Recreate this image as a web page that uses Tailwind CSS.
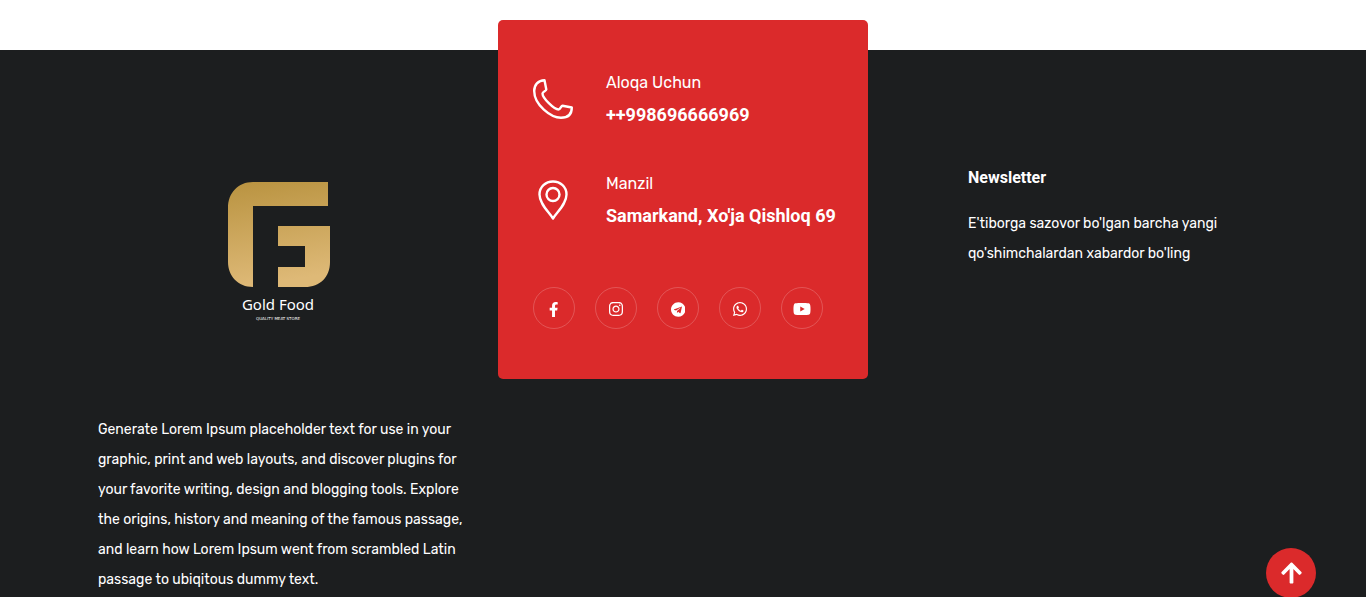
<!DOCTYPE html>
<html lang="uz">
<head>
<meta charset="utf-8">
<meta name="viewport" content="width=device-width, initial-scale=1">
<title>Gold Food</title>
<script src="https://cdn.jsdelivr.net/npm/@tailwindcss/browser@4"></script>
</head>
<body class="flex min-h-screen flex-col overflow-x-hidden bg-white font-['Rubik','Roboto',sans-serif] text-sm leading-[30px] text-white">
<footer class="mt-[50px] grow bg-[#1c1e1f] px-6">
  <div class="mx-auto grid max-w-[1170px] grid-cols-1 items-start gap-[30px] md:grid-cols-3">
    <section class="pt-[120px]">
      <a href="#" class="flex h-[184px] justify-center pt-3 pr-[10px]" aria-label="Gold Food">
        <svg class="h-[144px] w-[104px]" viewBox="0 0 104 144" role="img" aria-label="Gold Food, quality meat store">
          <defs>
            <linearGradient id="gold" x1="0" y1="0" x2="0.15" y2="1">
              <stop offset="0" stop-color="#b99340"/><stop offset="1" stop-color="#deb977"/>
            </linearGradient>
          </defs>
          <path fill="url(#gold)" d="M27 0H102V24H27V105C12 105 2 94 2 80V26C2 11 12 0 27 0ZM52 44H104V80C104 95 94 105 79 105H52V85H79V64H52Z"/>
          <text x="52" y="128" text-anchor="middle" class="fill-white font-['Noto_Sans'] text-[15px]">Gold Food</text>
          <text x="52" y="138" text-anchor="middle" class="fill-white font-['DejaVu_Sans'] text-[4px]">QUALITY MEAT STORE</text>
        </svg>
      </a>
      <p class="mt-[61px]">Generate Lorem Ipsum placeholder text for use in your graphic, print and web layouts, and discover plugins for your favorite writing, design and blogging tools. Explore the origins, history and meaning of the famous passage, and learn how Lorem Ipsum went from scrambled Latin passage to ubiqitous dummy text.</p>
    </section>

    <section class="-mt-[30px] rounded-[5px] bg-[#db2a2b] px-[35px] pt-12 pb-[50px]">
      <ul class="flex flex-col gap-[39px]">
        <li class="flex gap-[33px]">
          <svg class="mt-[11px] size-10 shrink-0" viewBox="0 0 40 40" fill="none" stroke="#fff" stroke-width="2.400" stroke-linejoin="round" aria-hidden="true">
            <path d="M11.500 1.200C5 1.200 1.200 6 1.200 12C1.200 26 18 38.800 28 38.800C35 38.800 38.800 35 38.800 28.500L29.500 26.800C28 26.800 27.500 30.500 25.500 30.500C21 30.500 9.500 19 9.500 14.500C9.500 12.500 13.300 12 13.300 10.500Z"/>
          </svg>
          <div>
            <p class="text-base leading-[30px]">Aloqa Uchun</p>
            <a href="tel:+998696666969" class="block pt-0.5 font-['Roboto'] text-lg leading-[30px] font-bold">++998696666969</a>
          </div>
        </li>
        <li class="flex gap-[33px]">
          <svg class="mt-[11px] size-10 shrink-0" viewBox="0 0 40 40" fill="none" stroke="#fff" stroke-width="2.400" stroke-linejoin="round" aria-hidden="true">
            <path d="M20 38.500C16 32 6.500 24 6.500 14.500C6.500 7 12.500 1.500 20 1.500S33.500 7 33.500 14.500C33.500 24 24 32 20 38.500Z"/>
            <circle cx="20" cy="14.500" r="6.500"/>
          </svg>
          <div>
            <p class="text-base leading-[30px]">Manzil</p>
            <p class="pt-0.5 font-['Roboto'] text-lg leading-[30px] font-bold whitespace-nowrap">Samarkand, Xo'ja Qishloq 69</p>
          </div>
        </li>
      </ul>
      <nav class="mt-14 flex flex-wrap gap-5" aria-label="Social">
        <a href="#" aria-label="Facebook" class="flex size-[42px] items-center justify-center rounded-full border border-white/20 pt-0.5">
          <svg class="h-[15px] fill-white" viewBox="0 0 320 512"><path d="M279.140 288l14.220-92.660h-88.910v-60.130c0-25.350 12.420-50.060 52.240-50.060h40.420V6.260S260.430 0 225.360 0c-73.220 0-121.080 44.380-121.080 124.720v70.620H22.890V288h81.390v224h100.170V288z"/></svg>
        </a>
        <a href="#" aria-label="Instagram" class="flex size-[42px] items-center justify-center rounded-full border border-white/20 pt-0.5">
          <svg class="h-4 fill-white" viewBox="0 0 448 512"><path d="M224.100 141c-63.600 0-114.900 51.300-114.900 114.900s51.300 114.900 114.900 114.900S339 319.500 339 255.900 287.700 141 224.100 141zm0 189.600c-41.100 0-74.700-33.500-74.700-74.700s33.500-74.700 74.700-74.700 74.700 33.500 74.700 74.700-33.600 74.700-74.700 74.700zm146.400-194.300c0 14.900-12 26.800-26.800 26.800-14.900 0-26.800-12-26.800-26.800s12-26.800 26.800-26.800 26.800 12 26.800 26.800zm76.100 27.200c-1.700-35.900-9.900-67.700-36.200-93.900-26.200-26.200-58-34.400-93.900-36.200-37-2.100-147.900-2.100-184.900 0-35.800 1.700-67.600 9.900-93.900 36.100s-34.400 58-36.200 93.900c-2.100 37-2.100 147.900 0 184.900 1.700 35.900 9.900 67.700 36.200 93.900s58 34.400 93.900 36.200c37 2.100 147.900 2.100 184.900 0 35.900-1.700 67.700-9.900 93.900-36.200 26.200-26.200 34.400-58 36.200-93.900 2.100-37 2.100-147.800 0-184.800zM398.800 388c-7.800 19.600-22.900 34.700-42.600 42.600-29.500 11.700-99.500 9-132.100 9s-102.700 2.600-132.100-9c-19.600-7.800-34.700-22.900-42.600-42.600-11.700-29.500-9-99.500-9-132.100s-2.600-102.700 9-132.100c7.800-19.600 22.900-34.700 42.600-42.600 29.500-11.700 99.500-9 132.100-9s102.700-2.600 132.100 9c19.600 7.800 34.700 22.900 42.600 42.600 11.700 29.500 9 99.500 9 132.100s2.700 102.700-9 132.100z"/></svg>
        </a>
        <a href="#" aria-label="Telegram" class="flex size-[42px] items-center justify-center rounded-full border border-white/20 pt-0.5">
          <svg class="h-[15px] fill-white" viewBox="0 0 496 512"><path d="M248 8C111 8 0 119 0 256s111 248 248 248 248-111 248-248S385 8 248 8zm121.800 169.900l-40.700 191.800c-3 13.600-11.100 16.900-22.400 10.500l-62-45.700-29.900 28.800c-3.300 3.300-6.100 6.100-12.500 6.100l4.400-63.100 114.900-103.800c5-4.400-1.100-6.900-7.700-2.500l-142 89.400-61.200-19.100c-13.300-4.200-13.600-13.300 2.800-19.700l239.100-92.200c11.100-4 20.800 2.700 17.200 19.500z"/></svg>
        </a>
        <a href="#" aria-label="WhatsApp" class="flex size-[42px] items-center justify-center rounded-full border border-white/20 pt-0.5">
          <svg class="h-4 fill-white" viewBox="0 0 448 512"><path d="M380.900 97.100C339 55.100 283.200 32 223.900 32c-122.400 0-222 99.600-222 222 0 39.100 10.200 77.300 29.600 111L0 480l117.700-30.900c32.400 17.700 68.900 27 106.100 27h.1c122.300 0 224.100-99.600 224.100-222 0-59.300-25.200-115-67.100-157zm-157 341.600c-33.200 0-65.700-8.900-94-25.700l-6.700-4-69.800 18.300L72 359.200l-4.400-7c-18.500-29.400-28.200-63.300-28.200-98.200 0-101.700 82.800-184.500 184.600-184.500 49.300 0 95.600 19.200 130.400 54.100 34.800 34.900 56.200 81.200 56.100 130.500 0 101.800-84.900 184.600-186.600 184.600zm101.200-138.200c-5.500-2.800-32.800-16.200-37.900-18-5.100-1.900-8.800-2.800-12.500 2.800-3.700 5.600-14.300 18-17.600 21.800-3.200 3.700-6.500 4.200-12 1.400-32.600-16.300-54-29.100-75.500-66-5.700-9.800 5.700-9.100 16.300-30.300 1.800-3.700.9-6.900-.5-9.700-1.400-2.800-12.500-30.100-17.100-41.200-4.500-10.800-9.100-9.300-12.500-9.500-3.200-.2-6.900-.2-10.600-.2-3.700 0-9.700 1.400-14.800 6.900-5.100 5.600-19.400 19-19.400 46.300 0 27.300 19.900 53.700 22.600 57.400 2.800 3.700 39.100 59.700 94.800 83.800 35.200 15.200 49 16.500 66.600 13.900 10.700-1.600 32.800-13.400 37.400-26.400 4.600-13 4.600-24.100 3.200-26.400-1.300-2.500-5-3.900-10.500-6.600z"/></svg>
        </a>
        <a href="#" aria-label="YouTube" class="flex size-[42px] items-center justify-center rounded-full border border-white/20 pt-0.5">
          <svg class="h-4 fill-white" viewBox="0 0 576 512"><path d="M549.655 124.083c-6.281-23.650-24.787-42.276-48.284-48.597C458.781 64 288 64 288 64S117.220 64 74.629 75.486c-23.497 6.322-42.003 24.947-48.284 48.597-11.412 42.867-11.412 132.305-11.412 132.305s0 89.438 11.412 132.305c6.281 23.650 24.787 41.500 48.284 47.821C117.220 448 288 448 288 448s170.780 0 213.371-11.486c23.497-6.321 42.003-24.171 48.284-47.821 11.412-42.867 11.412-132.305 11.412-132.305s0-89.438-11.412-132.305zm-317.510 213.508V175.185l142.739 81.205-142.739 81.201z"/></svg>
        </a>
      </nav>
    </section>

    <section class="pt-[113px] pl-[70px]">
      <h2 class="font-['Roboto'] text-base leading-[30px] font-bold">Newsletter</h2>
      <p class="mt-4">E'tiborga sazovor bo'lgan barcha yangi qo'shimchalardan xabardor bo'ling</p>
    </section>
  </div>
</footer>

<button type="button" aria-label="Back to top" class="fixed right-[50px] -bottom-px flex size-[50px] items-center justify-center rounded-full bg-[#db2a2b]">
  <svg class="h-6 fill-white" viewBox="0 0 448 512"><path d="M34.900 289.500l-22.200-22.200c-9.400-9.400-9.400-24.600 0-33.900L207 39c9.400-9.400 24.600-9.400 33.900 0l194.300 194.300c9.400 9.400 9.400 24.600 0 33.900L413 289.400c-9.500 9.500-25 9.300-34.300-.4L264 168.600V456c0 13.300-10.700 24-24 24h-32c-13.300 0-24-10.700-24-24V168.600L69.200 289.100c-9.300 9.800-24.800 10-34.300.4z"/></svg>
</button>
</body>
</html>
